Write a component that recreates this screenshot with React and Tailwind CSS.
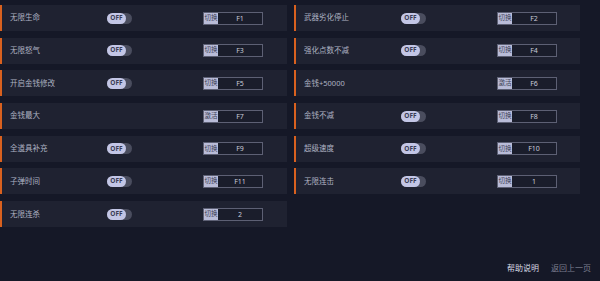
import React from "react";

const left = [
  { label: "无限生命", toggle: true, key: "切换", val: "F1" },
  { label: "无限怒气", toggle: true, key: "切换", val: "F3" },
  { label: "开启金钱修改", toggle: true, key: "切换", val: "F5" },
  { label: "金钱最大", toggle: false, key: "激活", val: "F7" },
  { label: "全道具补充", toggle: true, key: "切换", val: "F9" },
  { label: "子弹时间", toggle: true, key: "切换", val: "F11" },
  { label: "无限连杀", toggle: true, key: "切换", val: "2" },
];
const right = [
  { label: "武器劣化停止", toggle: true, key: "切换", val: "F2" },
  { label: "强化点数不减", toggle: true, key: "切换", val: "F4" },
  { label: "金钱+50000", toggle: false, key: "激活", val: "F6" },
  { label: "金钱不减", toggle: true, key: "切换", val: "F8" },
  { label: "超级速度", toggle: true, key: "切换", val: "F10" },
  { label: "无限连击", toggle: true, key: "切换", val: "1" },
];

function Row({ r }) {
  return (
    <div className="flex h-[26px] items-center border-l-[2px] border-[#d9611f] bg-[#1f2231]">
      <div className="w-[105px] shrink-0 pl-[8px] text-[7.5px] text-[#aeb2c2]">{r.label}</div>
      <div className="w-[96px] shrink-0">
        {r.toggle && (
          <div className="flex h-[11px] w-[25px] rounded-full bg-[#4a4d5e]">
            <div className="flex h-[11px] w-[19px] items-center justify-center rounded-full bg-[#c3c6e6] text-[6.5px] leading-none font-bold text-[#3a3d55]">
              OFF
            </div>
          </div>
        )}
      </div>
      <div className="flex h-[13px] w-[60px] border border-[#5d6074] bg-[#1a1d2b]">
        <div className="flex w-[14px] items-center justify-center bg-[#b9bcd8] text-[6.5px] leading-none text-[#3a3d55]">
          {r.key}
        </div>
        <div className="flex flex-1 items-center justify-center text-[7px] leading-none text-[#c8cbd8]">
          {r.val}
        </div>
      </div>
    </div>
  );
}

export default function App() {
  return (
    <div
      className="relative h-[281px] w-[600px] overflow-hidden bg-[#151827]"
      style={{ fontFamily: '"Noto Sans", "Noto Sans CJK SC", sans-serif' }}
    >
      <div className="flex gap-[7px] pt-[5px]">
        <div className="flex w-[287px] flex-col gap-[6.7px]">
          {left.map((r, i) => (
            <Row key={i} r={r} />
          ))}
        </div>
        <div className="flex w-[286px] flex-col gap-[6.7px]">
          {right.map((r, i) => (
            <Row key={i} r={r} />
          ))}
        </div>
      </div>
      <div className="absolute right-[9px] bottom-[7px] flex gap-[12px] text-[8px]">
        <span className="text-[#d8dae4]">帮助说明</span>
        <span className="text-[#7c7f90]">返回上一页</span>
      </div>
    </div>
  );
}
